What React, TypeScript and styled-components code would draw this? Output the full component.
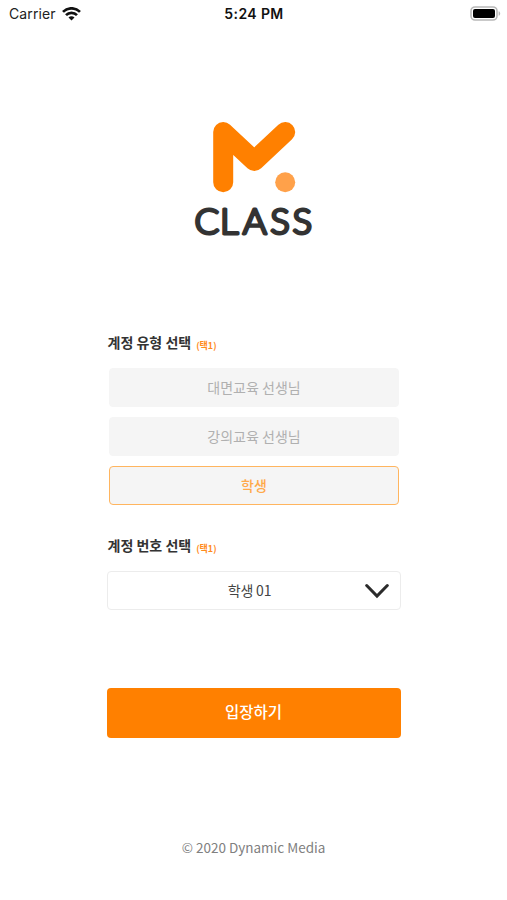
import React, { useState } from "react";
import styled, { createGlobalStyle } from "styled-components";

const GlobalStyle = createGlobalStyle`
  * { box-sizing: border-box; }
  body {
    margin: 0;
    background: #fff;
    color: #333;
    font-family: "Noto Sans CJK KR", "Noto Sans", sans-serif;
  }
  button { font-family: inherit; cursor: pointer; }
`;

const Screen = styled.div`
  height: 900px;
  display: flex;
  flex-direction: column;
  align-items: center;
  overflow: hidden;
`;

const StatusBar = styled.header`
  width: 100%;
  height: 28px;
  padding: 0 6px 0 9px;
  display: grid;
  grid-template-columns: 1fr auto 1fr;
  align-items: center;
  font-family: Inter, sans-serif;
  font-size: 14px;
  line-height: 28px;
  color: #222;
`;

const Carrier = styled.div`
  display: flex;
  align-items: center;
  gap: 6px;
  letter-spacing: 0.12px;
`;

const Clock = styled.time`
  font-weight: 600;
  letter-spacing: 0.4px;
  color: #111;
  padding-right: 2px;
`;

const Battery = styled.svg`
  justify-self: end;
  display: block;
  margin-bottom: 2px;
`;

const Logo = styled.svg`
  display: block;
  flex: none;
  margin-top: 87px;
`;

const Wordmark = styled.text`
  font-family: Lato, sans-serif;
  font-size: 34.5px;
  font-weight: 300;
  fill: #333;
  stroke: #333;
  stroke-width: 3px;
  stroke-linejoin: round;
`;

const Form = styled.main`
  width: 294px;
  margin: 84px 0 0;
  display: flex;
  flex-direction: column;
`;

const Label = styled.div`
  height: 26px;
  padding-left: 1px;
  display: flex;
  align-items: baseline;
  gap: 5px;
  font-size: 14px;
  font-weight: 700;
  line-height: 26px;
`;

const Hint = styled.small`
  position: relative;
  top: 1px;
  font-size: 9px;
  font-weight: 700;
  color: #ff8c1e;
`;

const Options = styled.div`
  margin: 13px 2px 0;
  display: grid;
  gap: 10px;
`;

const Option = styled.button<{ $selected: boolean }>`
  height: 39px;
  padding: 0 0 1px 1px;
  border: 1px solid ${(p) => (p.$selected ? "#ffb55f" : "#f5f5f5")};
  border-radius: 4px;
  background: #f5f5f5;
  color: ${(p) => (p.$selected ? "#ffa94a" : "#b0b0b0")};
  font-size: 14px;
  font-weight: ${(p) => (p.$selected ? 500 : 400)};
`;

const NumberLabel = styled(Label)`
  margin-top: 27px;
`;

const Select = styled.button`
  height: 39px;
  margin-top: 13px;
  padding: 0 11px;
  display: grid;
  grid-template-columns: 24px 1fr 24px;
  align-items: center;
  border: 1px solid #ececec;
  border-radius: 4px;
  background: #fff;
  color: #444;
  font-size: 14px;
`;

const SelectValue = styled.span`
  grid-column: 2;
  letter-spacing: -0.2px;
  padding: 0 8px 2px 0;
`;

const Submit = styled.button`
  height: 50px;
  margin-top: 78px;
  padding: 0 0 4px;
  border: 0;
  border-radius: 4px;
  background: #ff8000;
  color: #fff;
  font-size: 15.5px;
  font-weight: 500;
`;

const Footer = styled.footer`
  margin-top: 97px;
  font-size: 13.5px;
  line-height: 24px;
  color: #808080;
`;

const accountTypes = ["대면교육 선생님", "강의교육 선생님", "학생"];

export default function App() {
  const [type, setType] = useState("학생");
  return (
    <>
      <GlobalStyle />
      <Screen>
        <StatusBar>
          <Carrier>
            Carrier
            <svg width="19" height="14" viewBox="0 0 19 14" fill="none" stroke="#111" strokeWidth="2.7">
              <path d="M1 4.9C5.8.1 13.2.1 18 4.9" />
              <path d="M4 8.1C7 5.1 12 5.1 15 8.1" />
              <path d="M9.5 13.6 6.5 10.5C8.1 8.9 10.9 8.9 12.5 10.5Z" fill="#111" stroke="none" />
            </svg>
          </Carrier>
          <Clock>5:24 PM</Clock>
          <Battery width="31" height="15" viewBox="0 0 31 15">
            <rect x="1" y="1" width="26" height="13" rx="4" fill="#fff" stroke="#b8b8b8" strokeWidth="1.6" />
            <rect x="3" y="3" width="22" height="9" rx="2" fill="#000" />
            <path d="M28.6 5.2C30.7 5.8 30.7 9.2 28.6 9.8Z" fill="#b8b8b8" />
          </Battery>
        </StatusBar>
        <Logo width="126" height="130" viewBox="0 0 126 130" role="img" aria-label="M CLASS">
          <path
            d="M32.2 67.3V17L63.3 46L94.2 17"
            fill="none"
            stroke="#ff8000"
            strokeWidth="20"
            strokeLinecap="round"
            strokeLinejoin="round"
          />
          <circle cx="94.2" cy="67.3" r="10" fill="#ffa14a" />
          <Wordmark x="3.3 27.3 48.9 74.8 95.8" y="118.8" transform="scale(1.06 1)">CLASS</Wordmark>
        </Logo>
        <Form>
          <Label>계정 유형 선택<Hint>(택1)</Hint></Label>
          <Options>
            {accountTypes.map((name) => (
              <Option key={name} $selected={name === type} onClick={() => setType(name)}>
                {name}
              </Option>
            ))}
          </Options>
          <NumberLabel>계정 번호 선택<Hint>(택1)</Hint></NumberLabel>
          <Select>
            <SelectValue>학생 01</SelectValue>
            <svg width="24" height="16" viewBox="0 0 24 16" fill="none" stroke="#2b2b2b" strokeWidth="3" strokeLinecap="round">
              <path d="M1.7 2.5 12 13 22.3 2.5" />
            </svg>
          </Select>
          <Submit>입장하기</Submit>
        </Form>
        <Footer>© 2020 Dynamic Media</Footer>
      </Screen>
    </>
  );
}
